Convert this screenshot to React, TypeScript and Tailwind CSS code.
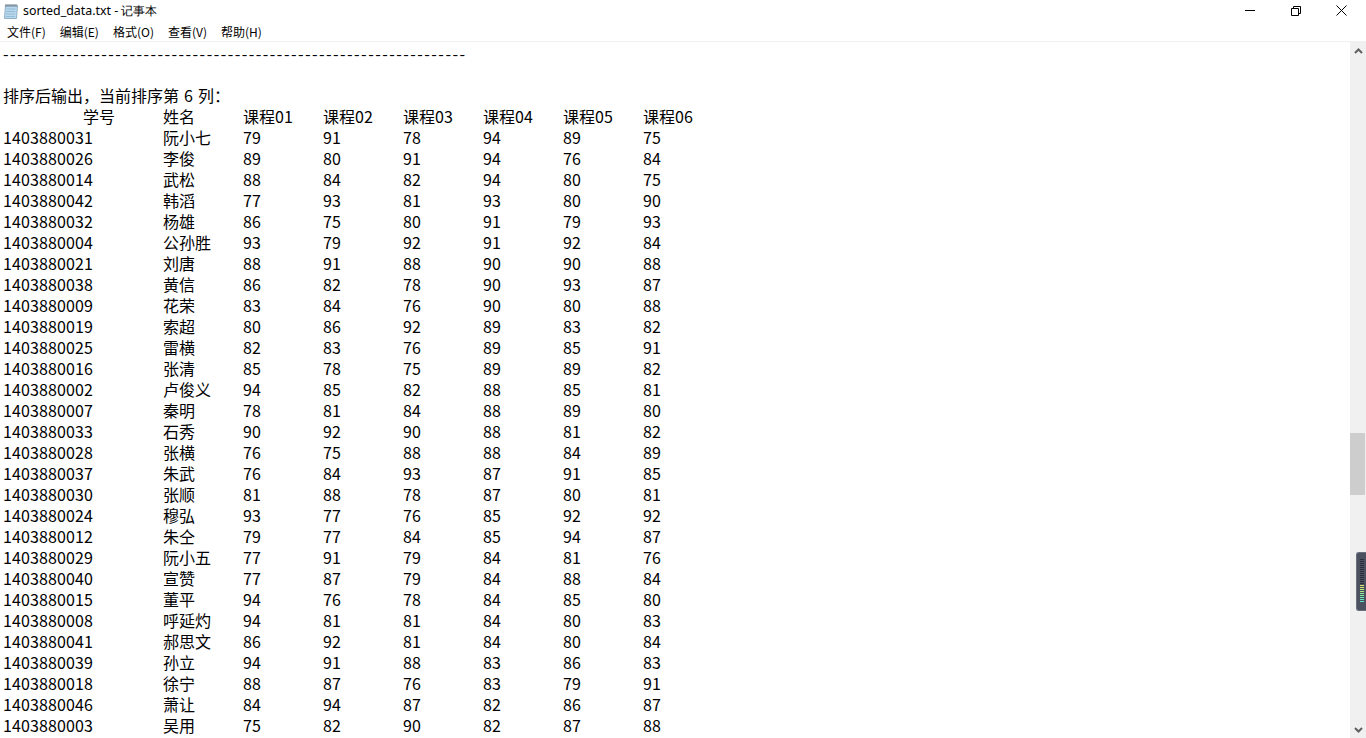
const rows = `1403880031 阮小七 79 91 78 94 89 75
1403880026 李俊 89 80 91 94 76 84
1403880014 武松 88 84 82 94 80 75
1403880042 韩滔 77 93 81 93 80 90
1403880032 杨雄 86 75 80 91 79 93
1403880004 公孙胜 93 79 92 91 92 84
1403880021 刘唐 88 91 88 90 90 88
1403880038 黄信 86 82 78 90 93 87
1403880009 花荣 83 84 76 90 80 88
1403880019 索超 80 86 92 89 83 82
1403880025 雷横 82 83 76 89 85 91
1403880016 张清 85 78 75 89 89 82
1403880002 卢俊义 94 85 82 88 85 81
1403880007 秦明 78 81 84 88 89 80
1403880033 石秀 90 92 90 88 81 82
1403880028 张横 76 75 88 88 84 89
1403880037 朱武 76 84 93 87 91 85
1403880030 张顺 81 88 78 87 80 81
1403880024 穆弘 93 77 76 85 92 92
1403880012 朱仝 79 77 84 85 94 87
1403880029 阮小五 77 91 79 84 81 76
1403880040 宣赞 77 87 79 84 88 84
1403880015 董平 94 76 78 84 85 80
1403880008 呼延灼 94 81 81 84 80 83
1403880041 郝思文 86 92 81 84 80 84
1403880039 孙立 94 91 88 83 86 83
1403880018 徐宁 88 87 76 83 79 91
1403880046 萧让 84 94 87 82 86 87
1403880003 吴用 75 82 90 82 87 88`.split("\n").map((r) => r.split(" "));

const header = ["", "学号", "姓名", "课程01", "课程02", "课程03", "课程04", "课程05", "课程06"];

const stripes = [
  ...Array(13).fill("bg-[#2b2f3b]"),
  "bg-[#d6e06a]",
  "bg-[#cde572]",
  "bg-[#bce87e]",
  "bg-[#a8ea8a]",
  "bg-[#94eb96]",
  "bg-[#80eba4]",
  "bg-[#70e9b2]",
  "bg-[#66e6bc]",
  "bg-[#5ee3c4]",
];

export default function App() {
  return (
    <div className="relative flex h-[738px] w-[1366px] flex-col overflow-hidden bg-white text-black [font-family:'Noto_Sans_CJK_SC','Noto_Sans',sans-serif]">
      <header className="flex h-[21px] shrink-0 items-center">
        <svg className="ml-[3px] h-[16px] w-[15px]" viewBox="0 0 15 16">
          <path d="M2.5 2.5h12l-1 13h-12z" fill="#b9d8ec" stroke="#8fb0c6" />
          <path d="M3.5 6h9M3.3 8.5h9M3 11h9M2.8 13.5h9" stroke="#93bcd6" />
          <path d="M3 1v3M5 1v3M7 1v3M9 1v3M11 1v3M13 1v3" stroke="#6f7f8c" />
        </svg>
        <span className="ml-[5px] pt-px text-[12.4px] [font-family:'Noto_Sans',sans-serif]">sorted_data.txt - 记事本</span>
        <div className="mr-[2px] ml-auto flex">
          <div className="flex h-[21px] w-[46px] items-center justify-center">
            <div className="h-px w-[10px] bg-black" />
          </div>
          <div className="flex h-[21px] w-[45px] items-center justify-center">
            <svg width="10" height="10" viewBox="0 0 10 10" fill="none" stroke="#000">
              <path d="M.5 2.5h7v7h-7zM2.5 2.5v-2h7v7h-2" />
            </svg>
          </div>
          <div className="flex h-[21px] w-[46px] items-center justify-center">
            <svg width="11" height="11" viewBox="0 0 11 11" fill="none" stroke="#000">
              <path d="M.5.5l10 10M10.5.5l-10 10" />
            </svg>
          </div>
        </div>
      </header>
      <nav className="flex h-[20px] shrink-0 items-center gap-[14px] pl-[7px] pt-px text-[12px] leading-[20px]">
        <span>文件(F)</span>
        <span>编辑(E)</span>
        <span>格式(O)</span>
        <span>查看(V)</span>
        <span>帮助(H)</span>
      </nav>
      <div className="h-px shrink-0 bg-[#f0f0f0]" />
      <main className="flex min-h-0 flex-1">
        <div className="min-w-0 flex-1 overflow-hidden pl-[3px] pt-px text-[16px]">
          <div className="h-[21px] whitespace-pre leading-[21px] tracking-[1.47px]">{"-".repeat(66)}</div>
          <div className="h-[21px]" />
          <div className="h-[21px] whitespace-pre leading-[21px] [word-spacing:1.5px]">排序后输出，当前排序第 6 列：</div>
          <div className="flex h-[21px] leading-[21px] whitespace-pre">
            {header.map((c, i) => (
              <div key={i} className="w-20 shrink-0">{c}</div>
            ))}
          </div>
          {rows.map((r) => (
            <div key={r[0]} className="flex h-[21px] leading-[21px] whitespace-pre">
              <div className="w-40 shrink-0 tracking-[0.12px]">{r[0]}</div>
              {r.slice(1).map((c, i) => (
                <div key={i} className="w-20 shrink-0">{c}</div>
              ))}
            </div>
          ))}
        </div>
        <aside className="flex w-[16px] shrink-0 flex-col items-stretch bg-[#f0f0f0]">
          <div className="flex h-[17px] items-center justify-center">
            <svg width="9" height="6" viewBox="0 0 9 6" fill="none" stroke="#606060" strokeWidth="2">
              <path d="M1 5l3.5-3.5L8 5" />
            </svg>
          </div>
          <div className="mt-[374px] mr-px h-[62px] bg-[#cdcdcd]" />
          <div className="mt-auto flex h-[17px] items-center justify-center">
            <svg width="9" height="6" viewBox="0 0 9 6" fill="none" stroke="#606060" strokeWidth="2">
              <path d="M1 1l3.5 3.5L8 1" />
            </svg>
          </div>
        </aside>
      </main>
      <div className="absolute right-0 top-[552px] flex h-[59px] w-[10px] flex-col items-center gap-px rounded-l-[3px] border border-r-0 border-[#6a6f7c] bg-[#4c5160] pt-[6px]">
        {stripes.map((c, i) => (
          <div key={i} className={`h-px w-[4px] shrink-0 ${c}`} />
        ))}
      </div>
    </div>
  );
}
